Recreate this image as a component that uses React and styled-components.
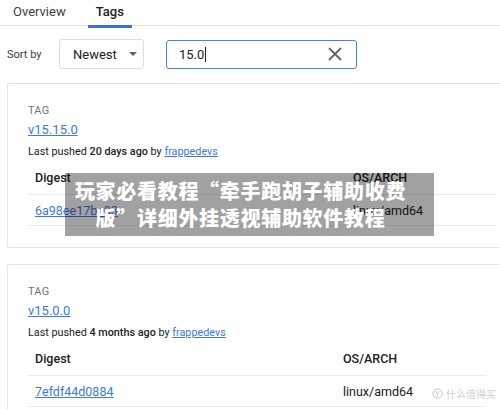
import React from "react";
import styled, { createGlobalStyle } from "styled-components";

const GlobalStyle = createGlobalStyle`
  html, body {
    margin: 0;
    padding: 0;
    background: #fff;
    overflow: hidden;
  }
  body {
    font-family: Roboto, "Noto Sans", "Liberation Sans", "Noto Sans CJK SC", sans-serif;
    color: #202124;
  }
`;

const tags = [
  {
    name: "v15.15.0",
    pushed: "20 days ago",
    by: "frappedevs",
    digest: "6a98ee17bc03",
    os: "linux/amd64",
    digestWidth: 318,
  },
  {
    name: "v15.0.0",
    pushed: "4 months ago",
    by: "frappedevs",
    digest: "7efdf44d0884",
    os: "linux/amd64",
    digestWidth: 308,
  },
];

function App() {
  return (
    <Page>
      <GlobalStyle />
      <Tabs>
        <Tab>Overview</Tab>
        <Tab active>Tags</Tab>
      </Tabs>
      <Filters>
        <SortLabel>Sort by</SortLabel>
        <Select>
          Newest
          <Caret />
        </Select>
        <Search>
          <SearchText>
            15.0
            <Cursor />
          </SearchText>
          <svg width="14" height="14" viewBox="0 0 14 14">
            <path
              d="M1.5 1.5 L12.5 12.5 M12.5 1.5 L1.5 12.5"
              stroke="#5f6368"
              strokeWidth="1.8"
              strokeLinecap="round"
            />
          </svg>
        </Search>
      </Filters>
      <CardList>
        {tags.map((t) => (
          <Card key={t.name}>
            <TagLabel>TAG</TagLabel>
            <TagLink href="#">{t.name}</TagLink>
            <Pushed>
              Last pushed <b>{t.pushed}</b> by <UserLink href="#">{t.by}</UserLink>
            </Pushed>
            <Table cols={t.digestWidth}>
              <HeadCell>Digest</HeadCell>
              <HeadCell>OS/ARCH</HeadCell>
              <Cell>
                <DigestLink href="#">{t.digest}</DigestLink>
              </Cell>
              <Cell>{t.os}</Cell>
            </Table>
          </Card>
        ))}
      </CardList>
      <Banner>
        玩家必看教程“牵手跑胡子辅助收费
        <br />
        版”详细外挂透视辅助软件教程
      </Banner>
      <Watermark>
        <svg width="11" height="11" viewBox="0 0 11 11">
          <circle cx="5.5" cy="5.5" r="4.5" fill="none" stroke="#cfcfcf" strokeWidth="1.2" />
          <path d="M3.5 3 L5.5 6 L7.5 3 M5.5 6 V8.5" stroke="#cfcfcf" strokeWidth="1" fill="none" />
        </svg>
        什么值得买
      </Watermark>
    </Page>
  );
}

export default App;

const Page = styled.div`
  position: relative;
  width: 500px;
  height: 409px;
  overflow: hidden;
`;

const Tabs = styled.div`
  display: flex;
  height: 25px;
  padding-left: 13px;
  gap: 22px;
  border-bottom: 1px solid #e3e3e3;
`;

const Tab = styled.div`
  position: relative;
  font-size: 13px;
  line-height: 23px;
  font-weight: ${({ active }) => (active ? 500 : 400)};
  color: ${({ active }) => (active ? "#202124" : "#3c4043")};
  padding: 0 ${({ active }) => (active ? "8px" : "0")};
  &::after {
    content: "";
    display: ${({ active }) => (active ? "block" : "none")};
    position: absolute;
    left: 0;
    right: 0;
    bottom: -3px;
    height: 3px;
    background: #3b6fd9;
  }
`;

const Filters = styled.div`
  display: flex;
  align-items: center;
  padding: 13px 0 0 7px;
  height: 30px;
`;

const SortLabel = styled.span`
  font-size: 11px;
  color: #3c4043;
  width: 52px;
`;

const Select = styled.div`
  box-sizing: border-box;
  width: 85px;
  height: 30px;
  border: 1px solid #dadce0;
  border-radius: 3px;
  display: flex;
  align-items: center;
  padding-left: 13px;
  font-size: 13px;
  color: #202124;
`;

const Caret = styled.span`
  margin-left: 12px;
  width: 0;
  height: 0;
  border-left: 4px solid transparent;
  border-right: 4px solid transparent;
  border-top: 4px solid #5f6368;
`;

const Search = styled.div`
  box-sizing: border-box;
  margin-left: 22px;
  width: 191px;
  height: 29px;
  border: 1.5px solid #4a80ec;
  border-radius: 3px;
  display: flex;
  align-items: center;
  justify-content: space-between;
  padding: 0 14px 0 12px;
`;

const SearchText = styled.span`
  display: flex;
  align-items: center;
  font-size: 13px;
  color: #202124;
`;

const Cursor = styled.span`
  width: 1px;
  height: 15px;
  background: #202124;
  margin-left: 1px;
`;

const CardList = styled.div`
  display: flex;
  flex-direction: column;
  gap: 16px;
  padding: 14px 0 0 7px;
`;

const Card = styled.div`
  width: 520px;
  border: 1px solid #e4e4e4;
  border-radius: 2px;
  padding: 19px 0 21px 20px;
  display: flex;
  flex-direction: column;
  align-items: flex-start;
`;

const TagLabel = styled.div`
  font-size: 11px;
  line-height: 16px;
  color: #70757a;
  letter-spacing: 0.2px;
`;

const TagLink = styled.a`
  font-size: 13px;
  line-height: 18px;
  margin-top: 2px;
  color: #3b78e7;
  text-decoration: underline;
`;

const Pushed = styled.div`
  font-size: 10.8px;
  line-height: 16px;
  margin-top: 5px;
  color: #202124;
  b {
    font-weight: 500;
  }
`;

const UserLink = styled.a`
  color: #3b78e7;
  text-decoration: underline;
`;

const Table = styled.div`
  display: grid;
  grid-template-columns: ${({ cols }) => cols}px 150px;
  width: 476px;
`;

const HeadCell = styled.div`
  height: 34px;
  display: flex;
  align-items: center;
  padding-left: 7px;
  font-size: 12.5px;
  font-weight: 500;
  border-bottom: 1px solid #ececec;
`;

const Cell = styled.div`
  height: 30px;
  display: flex;
  align-items: center;
  padding-left: 7px;
  font-size: 12.5px;
  color: #202124;
  border-bottom: 1px solid #ececec;
`;

const DigestLink = styled.a`
  color: #3b78e7;
  text-decoration: underline;
`;

const Banner = styled.div`
  position: absolute;
  left: 65px;
  top: 173px;
  width: 369px;
  height: 63px;
  box-sizing: border-box;
  padding: 4px 18px 0 0;
  background: rgba(0, 0, 0, 0.37);
  color: #fff;
  font-family: "Noto Sans CJK SC", sans-serif;
  font-weight: 900;
  font-size: 20px;
  line-height: 27px;
  text-align: center;
  letter-spacing: 0.7px;
`;

const Watermark = styled.div`
  position: absolute;
  right: 4px;
  bottom: 8px;
  display: flex;
  align-items: center;
  gap: 3px;
  font-family: "Noto Sans CJK SC", sans-serif;
  font-size: 10px;
  color: #cfcfcf;
`;
